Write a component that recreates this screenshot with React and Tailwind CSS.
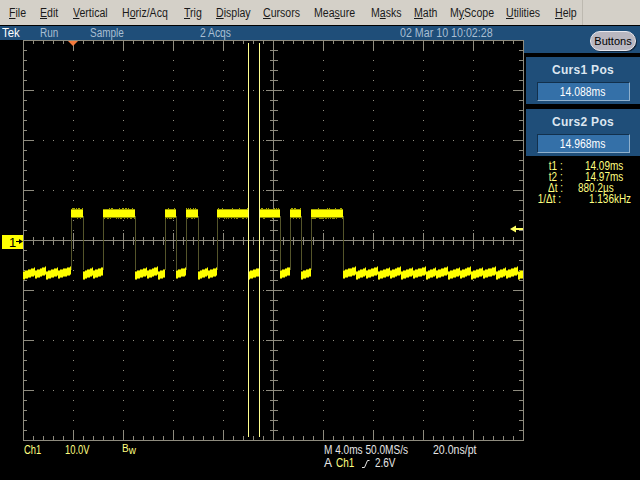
import React from "react";

const MENUS = [
  ["", "F", "ile", "w-[31px]"],
  ["", "E", "dit", "w-[33px]"],
  ["", "V", "ertical", "w-[49px]"],
  ["H", "o", "riz/Acq", "w-[62px]"],
  ["", "T", "rig", "w-[32px]"],
  ["", "D", "isplay", "w-[47px]"],
  ["", "C", "ursors", "w-[51px]"],
  ["Mea", "s", "ure", "w-[57px]"],
  ["M", "a", "sks", "w-[43px]"],
  ["", "M", "ath", "w-[36px]"],
  ["M", "y", "Scope", "w-[56px]"],
  ["", "U", "tilities", "w-[49px]"],
  ["", "H", "elp", "w-[27px]"],
];

const HIGH = [[71, 83], [103, 135], [165, 176], [186, 198], [217, 248], [259, 280], [290, 301], [311, 343]];
const LOW = [[23, 71], [83, 103], [135, 165], [176, 186], [198, 217], [248, 259], [280, 290], [301, 311], [343, 523]];
const PERIODS = [12, 11, 12, 13, 10, 12];

const noise = (n) => {
  const v = Math.sin(n * 12.9898) * 43758.5453;
  return v - Math.floor(v);
};

// squeezed text, the scope's font is narrower than Liberation Sans
const Narrow = ({ className, children }) => (
  <span className={`inline-block whitespace-nowrap origin-left ${className}`}>{children}</span>
);

const Grid = () => {
  const ticks = [];
  for (let i = 1; i < 50; i++) {
    const x = 23.5 + i * 10;
    const major = i % 5 === 0;
    const size = major ? 10 : 4;
    const cross = major ? 8 : 4;
    ticks.push(`M${x} 40v${size}M${x} 440v-${size}`);
    ticks.push(`M${x} ${240.5 - cross}v${cross * 2}`);
  }
  for (let i = 1; i < 40; i++) {
    const y = 40.5 + i * 10;
    const major = i % 5 === 0;
    const size = major ? 10 : 4;
    const cross = major ? 8 : 4;
    ticks.push(`M23 ${y}h${size}M523 ${y}h-${size}`);
    ticks.push(`M${273.5 - cross} ${y}h${cross * 2}`);
  }
  const dots = [];
  for (let i = 1; i < 10; i++) {
    for (let j = 1; j < 40; j++) {
      if (i !== 5) dots.push([23 + i * 50, 40 + j * 10]);
    }
  }
  for (let i = 1; i < 8; i++) {
    for (let j = 1; j < 50; j++) {
      if (i !== 4 && j % 5 !== 0) dots.push([23 + j * 10, 40 + i * 50]);
    }
  }
  return (
    <g shapeRendering="crispEdges">
      <path d="M23.5 40v400.500M523.5 40v400.500M23 40.500h501M23 440.500h501M23 240.500h500M273.5 40v400" stroke="#8e8b7e" fill="none" />
      <path d={ticks.join("")} stroke="#8e8b7e" fill="none" />
      {dots.map(([x, y]) => (
        <rect key={`${x}-${y}`} x={x} y={y} width="1" height="1" fill="#8e8b7e" />
      ))}
    </g>
  );
};

const Trace = () => {
  const cols = [];
  HIGH.forEach(([a, b], s) => {
    for (let x = a; x < b; x++) {
      const n = noise(x + s);
      cols.push(<rect key={`h${x}`} x={x} y={208 + Math.round(n * 1.5)} width="1" height="3" fill="#a8a800" />);
      cols.push(<rect key={`hc${x}`} x={x} y="210" width="1" height="7" fill="#ffff00" />);
      cols.push(<rect key={`hb${x}`} x={x} y="217" width="1" height={n > 0.6 ? 2 : 1} fill="#8c8c00" />);
    }
  });
  let teeth = 0;
  LOW.forEach(([a, b]) => {
    let start = a;
    while (start < b) {
      const p = PERIODS[teeth++ % PERIODS.length];
      for (let x = start; x < Math.min(start + p, b); x++) {
        const top = 271 - Math.round(((x - start) / p) * 4) + (teeth % 2);
        cols.push(<rect key={`l${x}`} x={x} y={top} width="1" height="7" fill="#ffff00" />);
        cols.push(<rect key={`ld${x}`} x={x} y={top - 1} width="1" height="1" fill="#8c8c00" />);
        cols.push(<rect key={`lb${x}`} x={x} y={top + 7} width="1" height="1" fill="#8c8c00" />);
      }
      start += p;
    }
  });
  const edges = HIGH.flat().map((x) => `M${x + 0.5} 216V270`).join("");
  return (
    <g shapeRendering="crispEdges">
      <path d={edges} stroke="#54542a" fill="none" />
      {cols}
      <path d="M248.5 43V437M259.5 43V437" stroke="#ffff90" fill="none" />
    </g>
  );
};

const Scope = () => (
  <svg className="absolute left-0 top-[-40px]" width="640" height="481" viewBox="0 0 640 481">
    <Grid />
    <Trace />
    <path d="M68 41h10l-5 5z" fill="#f47a3c" />
    <path d="M510 229l6-3.500v2.500h7v2h-7v2.500z" fill="#ffff60" />
    <path d="M16 241h3v-2l4 2.500-4 2.500v-2h-3z" fill="#000" />
  </svg>
);

const CursorPanel = ({ title, value }) => (
  <div className="h-[47px] bg-[#1f4e79] flex flex-col items-center">
    <div className="h-[25px] pt-[5px] text-[12px] leading-[16px] font-bold tracking-[0.3px] text-[#dce6f0]">{title}</div>
    <div className="w-[93px] h-[19px] bg-[#3470a8] border border-t-[#12304c] border-l-[#12304c] border-r-[#8fb0cc] border-b-[#8fb0cc] text-center text-[13px] leading-[17px] text-white">
      <span className="inline-block scale-x-[0.8]">{value}</span>
    </div>
  </div>
);

const Readout = ({ label, value, offset }) => (
  <div className="flex h-[11px] leading-[11px]">
    <div className="w-[39px] text-right">
      <span className="inline-block whitespace-nowrap origin-right scale-x-[0.83]">{label}</span>
    </div>
    <div className={offset}>
      <Narrow className="scale-x-[0.83]">{value}</Narrow>
    </div>
  </div>
);

const TriggerSlope = () => (
  <svg width="8" height="8" viewBox="0 0 8 8" className="mt-[3px]">
    <path d="M0 7.500h2.500l3-7h2" stroke="#e6e6e6" fill="none" />
  </svg>
);

export default function App() {
  return (
    <div className="relative w-[640px] h-[480px] bg-black overflow-hidden font-['Liberation_Sans',Arial,sans-serif]">
      <div className="h-[25px] bg-[#d4d0c8] flex items-center pl-[9px] text-[12px] text-[#1a1a1a]">
        {MENUS.map(([before, key, after, width]) => (
          <span key={before + key + after} className={width}>
            <Narrow className="scale-x-[0.88]">
              {before}
              <span className="underline">{key}</span>
              {after}
            </Narrow>
          </span>
        ))}
        <div className="h-full w-px bg-[#bdb9b0]" />
      </div>
      <div className="mt-px h-[14px] bg-[#1f4e79] flex items-center text-[12px] leading-[14px] text-[#a9bfd3] whitespace-nowrap">
        <span className="ml-[2px] w-[38px] text-white">
          <Narrow className="scale-x-[0.95]">Tek</Narrow>
        </span>
        <span className="w-[50px]">
          <Narrow className="scale-x-[0.83]">Run</Narrow>
        </span>
        <span className="w-[110px]">
          <Narrow className="scale-x-[0.83]">Sample</Narrow>
        </span>
        <span className="w-[200px]">
          <Narrow className="scale-x-[0.86]">2 Acqs</Narrow>
        </span>
        <Narrow className="scale-x-[0.89]">02 Mar 10 10:02:28</Narrow>
      </div>
      <div className="relative h-[401px]">
        <div className="absolute left-[2px] top-[195px] w-[21px] h-[14px] bg-[#ffff00] text-[13px] leading-[15px] text-black pl-[7px]">1</div>
        <Scope />
        <div className="ml-[524px] relative">
          <div className="h-[13px] bg-[#1f4e79]" />
          <div className="ml-[2px] mt-[4px] flex flex-col gap-[5px]">
            <CursorPanel title="Curs1 Pos" value="14.088ms" />
            <CursorPanel title="Curs2 Pos" value="14.968ms" />
          </div>
          <div className="mt-[5px] text-[12px] text-[#ffff80]">
            <Readout label="t1 :" value="14.09ms" offset="ml-[22px]" />
            <Readout label="t2 :" value="14.97ms" offset="ml-[22px]" />
            <Readout label="Δt :" value="880.2µs" offset="ml-[15px]" />
            <Readout label="1/Δt :" value="1.136kHz" offset="ml-[28px]" />
          </div>
        </div>
      </div>
      <div className="flex text-[12px] leading-[12px] pt-[3px] text-[#ffff80]">
        <span className="ml-[24px] w-[41px]">
          <Narrow className="scale-x-[0.78]">Ch1</Narrow>
        </span>
        <span className="w-[57px]">
          <Narrow className="scale-x-[0.78]">10.0V</Narrow>
        </span>
        <span className="w-[202px] text-[10px] leading-[9px]">
          B<span className="relative top-[2px]">w</span>
        </span>
        <div className="text-[#e6e6e6]">
          <div className="flex h-[12px]">
            <span className="w-[109px]">
              <Narrow className="scale-x-[0.84]">M 4.0ms 50.0MS/s</Narrow>
            </span>
            <Narrow className="scale-x-[0.88]">20.0ns/pt</Narrow>
          </div>
          <div className="flex h-[12px] mt-[1px]">
            <span className="w-[12px]">A</span>
            <span className="w-[26px] text-[#ffff80]">
              <Narrow className="scale-x-[0.83]">Ch1</Narrow>
            </span>
            <span className="w-[13px]">
              <TriggerSlope />
            </span>
            <Narrow className="scale-x-[0.83]">2.6V</Narrow>
          </div>
        </div>
      </div>
      <div className="absolute left-[590px] top-[31px] w-[46px] h-[20px] rounded-full bg-[#b9b7c0] border border-[#e8e8ee] shadow-[1px_1px_0_#10263c] text-[11px] leading-[18px] text-center text-black">
        Buttons
      </div>
    </div>
  );
}
